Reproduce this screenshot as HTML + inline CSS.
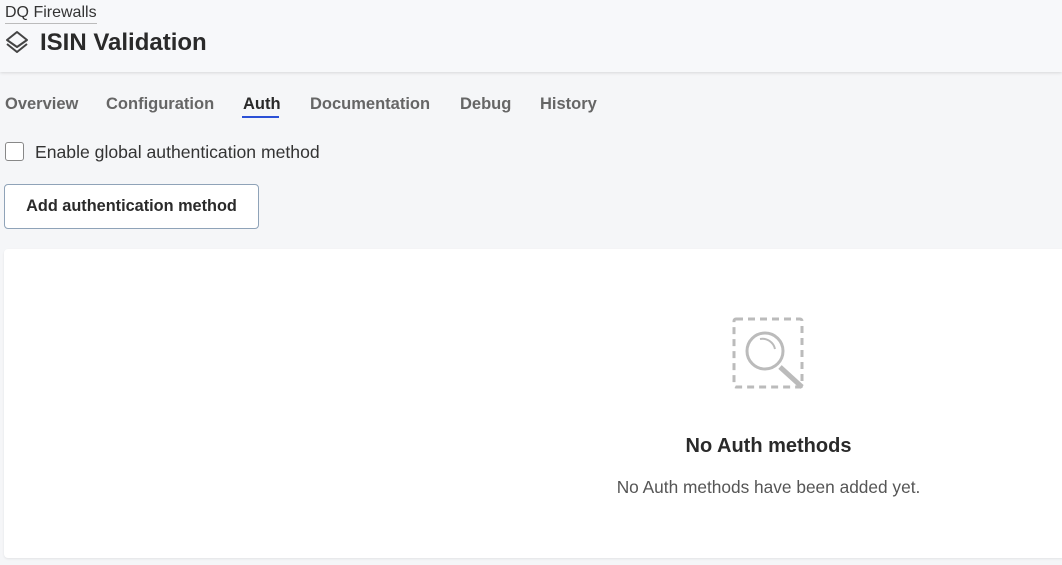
<!DOCTYPE html>
<html><head><style>
body{margin:0;width:1062px;height:565px;background:#f5f6f8;font-family:"Liberation Sans",sans-serif;color:#2b2b2b;overflow:hidden;position:relative}
.hdr{position:absolute;left:0;top:0;width:1062px;height:72px;background:#f7f8fa;box-shadow:0 1px 3px rgba(0,0,0,.12)}
.bc{position:absolute;left:5px;top:4px;font-size:16px;color:#333;border-bottom:1px solid #bbb;padding-bottom:1px;line-height:18px}
.title{position:absolute;left:40px;top:29px;font-size:24px;font-weight:bold;color:#2a2a2a}
.tabs span{position:absolute;top:95px;font-size:16.5px;font-weight:bold;color:#666}
.cb{position:absolute;left:5px;top:142px;width:17px;height:17px;border:1px solid #888;border-radius:3px;background:#fff}
.btn{position:absolute;left:4px;top:184px;width:253px;height:43px;border:1px solid #8fa3b8;border-radius:4px;background:#fff;font-size:16.3px;font-weight:bold;color:#2a2a2a;text-align:center;line-height:43px}
.card{position:absolute;left:4px;top:249px;width:1062px;height:309px;background:#fff;border-radius:4px;box-shadow:0 1px 2px rgba(0,0,0,.08)}
</style></head><body>
<div class="hdr">
<div class="bc">DQ Firewalls</div>
<svg style="position:absolute;left:5px;top:30px" width="24" height="24" viewBox="0 0 24 24" fill="none" stroke="#444" stroke-width="2" stroke-linejoin="round"><path d="M12 2L22 10 12 17 2 10Z"/><path d="M2 14l10 8 10-8"/></svg>
<div class="title">ISIN Validation</div>
</div>
<div class="tabs">
<span style="left:5px">Overview</span>
<span style="left:106px">Configuration</span>
<span style="left:243px;color:#2a2a2a">Auth</span>
<span style="left:310px">Documentation</span>
<span style="left:460px">Debug</span>
<span style="left:540px">History</span>
</div>
<div style="position:absolute;left:242px;top:116px;width:37px;height:2px;background:#2b50d6"></div>
<div class="cb"></div>
<div style="position:absolute;left:35px;top:142px;font-size:17.6px;color:#333">Enable global authentication method</div>
<div class="btn">Add authentication method</div>
<div class="card"></div>
<svg style="position:absolute;left:730px;top:315px" width="80" height="80" viewBox="0 0 80 80" fill="none" stroke="#bbb" stroke-width="3"><rect x="4" y="4" width="68" height="68" stroke-dasharray="7 5" rx="2"/><circle cx="35" cy="36" r="18"/><path d="M30 24a13 13 0 0 1 15 10" stroke-width="2"/><path d="M50 52l22 20" stroke-width="5"/></svg>
<div style="position:absolute;left:0;width:1537px;top:435px;text-align:center;font-size:20px;font-weight:bold;color:#2a2a2a">No Auth methods</div>
<div style="position:absolute;left:0;width:1537px;top:477px;text-align:center;font-size:17.3px;color:#555">No Auth methods have been added yet.</div>
</body></html>
